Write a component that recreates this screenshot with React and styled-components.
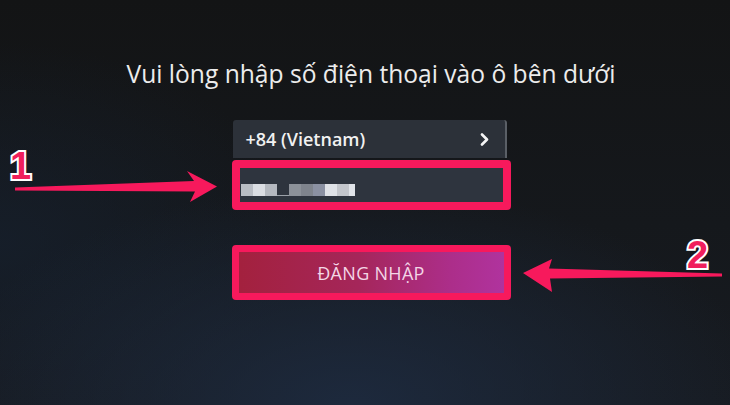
import styled, { createGlobalStyle } from 'styled-components'

const GlobalStyle = createGlobalStyle`
	html, body {
		margin: 0;
		padding: 0;
		background: #141516;
	}
`

const Screen = styled.div`
	position: relative;
	width: 730px;
	height: 405px;
	overflow: hidden;
	display: flex;
	flex-direction: column;
	align-items: center;
	padding-left: 12px;
	box-sizing: border-box;
	font-family: 'Open Sans', 'Noto Sans', sans-serif;
	background:
		radial-gradient(ellipse 420px 220px at 48% 100%, rgba(30, 44, 66, 0.85) 0%, rgba(30, 44, 66, 0) 100%),
		radial-gradient(ellipse 300px 200px at 0% 60%, rgba(22, 32, 46, 0.7) 0%, rgba(22, 32, 46, 0) 100%),
		linear-gradient(180deg, #131415 0%, #15181c 55%, #171b21 100%);
`

const Title = styled.h1`
	margin: 58px 0 0;
	font-size: 24.6px;
	font-weight: 400;
	line-height: 32px;
	color: #ececec;
`

const Form = styled.div`
	width: 279px;
	margin-top: 30px;
	display: flex;
	flex-direction: column;
`

const CountrySelect = styled.div`
	height: 38px;
	margin: 0 4px 0 1px;
	padding: 0 16px 0 13px;
	display: flex;
	align-items: center;
	justify-content: space-between;
	background: #2c3139;
	border-right: 2px solid #5a5f66;
	border-radius: 3px 3px 0 0;
	color: #f2f2f2;
	font-size: 18px;
	font-weight: 600;
`

const Highlight = styled.div`
	border: ${({ $width }) => $width}px solid #f7195c;
	border-radius: 4px;
	margin-top: ${({ $top }) => $top}px;
`

const PhoneInput = styled.div`
	height: 34px;
	background: #2e343e;
	display: flex;
	align-items: flex-end;
	padding: 0 0 6px 1px;
	box-sizing: border-box;
`

const Pixel = styled.span`
	width: ${({ $w }) => $w || 12}px;
	height: 12px;
	background: ${({ $c }) => $c};
	border-bottom: ${({ $under }) => ($under ? '1px solid #9aa0a8' : 'none')};
	box-sizing: border-box;
`

const LoginButton = styled.div`
	height: 41px;
	display: flex;
	align-items: center;
	justify-content: center;
	background: linear-gradient(90deg, #a3213e 0%, #a5265a 45%, #ac2e8a 80%, #b0339e 100%);
	color: #f3d6e6;
	font-size: 18px;
	letter-spacing: 0.3px;
`

const Marker = styled.span`
	position: absolute;
	left: ${({ $x }) => $x}px;
	top: ${({ $y }) => $y}px;
	font-family: 'Liberation Sans', Arial, sans-serif;
	font-weight: 700;
	font-size: 38px;
	line-height: 1;
	color: #f01f5c;
	-webkit-text-stroke: 4px #ffffff;
	paint-order: stroke fill;
`

const Arrows = styled.svg`
	position: absolute;
	inset: 0;
	pointer-events: none;
`

const pixels = [
	{ c: '#b9bdc4' },
	{ c: '#dadde2' },
	{ c: '#b4b8bf' },
	{ c: '#2e343e', under: true },
	{ c: '#8c9199' },
	{ c: '#7f848d' },
	{ c: '#8b91a2' },
	{ c: '#dfe2e7' },
	{ c: '#c3c6cc' },
	{ c: '#e0e3e8', w: 6 },
]

function Chevron() {
	return (
		<svg width="9" height="13" viewBox="0 0 9 13">
			<polyline
				points="2,1.5 7,6.5 2,11.5"
				fill="none"
				stroke="#f5f5f5"
				strokeWidth="2.6"
				strokeLinecap="round"
				strokeLinejoin="round"
			/>
		</svg>
	)
}

function App() {
	return (
		<>
			<GlobalStyle />
			<Screen>
				<Title>Vui lòng nhập số điện thoại vào ô bên dưới</Title>
				<Form>
					<CountrySelect>
						<span>+84 (Vietnam)</span>
						<Chevron />
					</CountrySelect>
					<Highlight $width={8} $top={2}>
						<PhoneInput>
							{pixels.map((p, i) => (
								<Pixel key={i} $c={p.c} $w={p.w} $under={p.under} />
							))}
						</PhoneInput>
					</Highlight>
					<Highlight $width={7} $top={35}>
						<LoginButton>ĐĂNG NHẬP</LoginButton>
					</Highlight>
				</Form>

				<Arrows width="730" height="405" viewBox="0 0 730 405">
					<polygon
						points="15,187.5 194,181 187,171 217,186.5 190,202 195,191.5 15,190.5"
						fill="#f7195c"
					/>
					<polygon
						points="523,273 552,259 549,268.5 722,273.5 722,276.5 550,278.5 552,292"
						fill="#f7195c"
					/>
				</Arrows>
				<Marker $x={10} $y={147}>1</Marker>
				<Marker $x={687} $y={236}>2</Marker>
			</Screen>
		</>
	)
}

export default App
